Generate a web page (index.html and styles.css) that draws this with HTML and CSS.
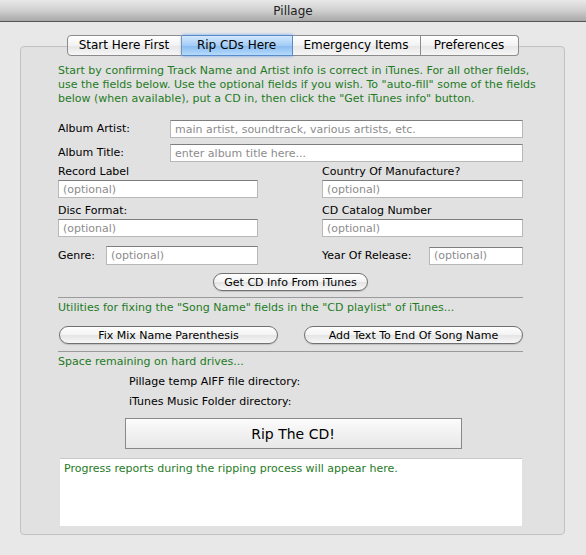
FILE: index.html
```html
<!DOCTYPE html>
<html lang="en">
<head>
  <meta charset="UTF-8">
  <meta name="viewport" content="width=device-width, initial-scale=1.0">
  <title>Pillage</title>
  <link rel="stylesheet" href="styles.css">
</head>
<body>
  <div class="titlebar">Pillage</div>

  <div class="tabview">
    <div class="tabs">
      <div class="tab first">Start Here First</div>
      <div class="tab active">Rip CDs Here</div>
      <div class="tab emergency">Emergency Items</div>
      <div class="tab last">Preferences</div>
    </div>

    <div class="panel">
      <div class="content">
        <p class="note intro">Start by confirming Track Name and Artist info is correct in iTunes. For all other fields, use the fields below. Use the optional fields if you wish. To "auto-fill" some of the fields below (when available), put a CD in, then click the "Get iTunes info" button.</p>

        <!-- Album fields -->
        <div class="row wide first-row">
          <label>Album Artist:</label>
          <input type="text" placeholder="main artist, soundtrack, various artists, etc.">
        </div>
        <div class="row wide">
          <label>Album Title:</label>
          <input type="text" placeholder="enter album title here...">
        </div>

        <!-- Optional fields -->
        <div class="grid">
          <div class="field">
            <label>Record Label</label>
            <input type="text" placeholder="(optional)">
          </div>
          <div class="field">
            <label>Country Of Manufacture?</label>
            <input type="text" placeholder="(optional)">
          </div>
          <div class="field">
            <label>Disc Format:</label>
            <input type="text" placeholder="(optional)">
          </div>
          <div class="field">
            <label>CD Catalog Number</label>
            <input type="text" placeholder="(optional)">
          </div>
          <div class="row genre">
            <label>Genre:</label>
            <input type="text" placeholder="(optional)">
          </div>
          <div class="row year">
            <label>Year Of Release:</label>
            <input type="text" placeholder="(optional)">
          </div>
        </div>

        <div class="center">
          <button class="pill get-info">Get CD Info From iTunes</button>
        </div>

        <hr>
        <p class="note">Utilities for fixing the "Song Name" fields in the "CD playlist" of iTunes...</p>
        <div class="utilities">
          <button class="pill">Fix Mix Name Parenthesis</button>
          <button class="pill">Add Text To End Of Song Name</button>
        </div>

        <hr>
        <p class="note">Space remaining on hard drives...</p>
        <div class="drives">
          <p>Pillage temp AIFF file directory:</p>
          <p>iTunes Music Folder directory:</p>
        </div>

        <div class="center">
          <button class="rip">Rip The CD!</button>
        </div>

        <div class="progress">Progress reports during the ripping process will appear here.</div>
      </div>
    </div>
  </div>
</body>
</html>
```

FILE: styles.css
```css
body {
  font-family: "DejaVu Sans", Verdana, sans-serif;
  font-size: 11px;
  margin: 0;
  padding: 0;
  background-color: #e8e8e8;
  color: #000;
}
.titlebar {
  height: 21px;
  line-height: 22px;
  text-align: center;
  font-size: 12px;
  color: #222;
  background: linear-gradient(#e9e9e9, #cfcfcf 50%, #a8a8a8);
  border-bottom: 1px solid #555;
}
.tabview {
  padding: 13px 21px 0 20px;
}
.tabs {
  display: flex;
  justify-content: center;
  position: relative;
  z-index: 1;
  margin-bottom: -10px;
}
.tab {
  width: 113px;
  height: 19px;
  line-height: 19px;
  text-align: center;
  font-size: 12px;
  border: 1px solid #8c8c8c;
  border-left: none;
  background: linear-gradient(#ffffff, #f2f2f2 50%, #e6e6e6 51%, #f6f6f6);
}
.tab.first {
  border-left: 1px solid #8c8c8c;
  border-radius: 4px 0 0 4px;
}
.tab.active {
  width: 110px;
  background: linear-gradient(#d3e8fe, #a3ccf6 50%, #88bbf0 51%, #b5dafc);
  border-color: #5a8bc8;
  box-shadow: 0 0 3px #6aa3e8;
}
.tab.emergency {
  width: 127px;
}
.tab.last {
  width: 97px;
  border-radius: 0 4px 4px 0;
}
.panel {
  background-color: #e1e1e1;
  border: 1px solid #c2c2c2;
  border-radius: 4px;
  height: 487px;
}
.content {
  width: 465px;
  margin: 17px 0 0 37px;
}
.note {
  color: #1e7b1e;
  margin: 0;
  line-height: 14px;
}
.intro {
  width: 480px;
}
label {
  line-height: 14px;
  white-space: nowrap;
}
input {
  font-family: inherit;
  font-size: 11px;
  height: 18px;
  min-width: 0;
  box-sizing: border-box;
  padding: 0 4px;
  border: 1px solid #b8b8b8;
  border-top-color: #7e7e7e;
  background-color: #fff;
  outline: none;
}
input::placeholder {
  color: #8c8c8c;
}
.row {
  display: flex;
  align-items: center;
}
.wide {
  margin-top: 6px;
}
.wide.first-row {
  margin-top: 14px;
}
.wide label {
  width: 112px;
}
.wide input {
  flex: 1;
}
.grid {
  display: grid;
  grid-template-columns: 200px minmax(0, 1fr);
  column-gap: 64px;
  row-gap: 6px;
  margin-top: 3px;
}
.field label {
  display: block;
  margin-bottom: 1px;
}
.field input {
  width: 100%;
}
.genre, .year {
  margin-top: 3px;
}
.genre label {
  width: 48px;
}
.genre input {
  flex: 1;
  height: 19px;
}
.year label {
  width: 107px;
}
.year input {
  flex: 1;
}
.center {
  display: flex;
  justify-content: center;
}
button {
  font-family: inherit;
  color: #000;
  cursor: pointer;
}
.pill {
  height: 18px;
  font-size: 11px;
  padding: 0 10px;
  border: 1px solid #707070;
  border-radius: 9px;
  background: linear-gradient(#ffffff, #f3f3f3 50%, #e4e4e4 51%, #f7f7f7);
  box-shadow: 0 1px 1px rgba(0, 0, 0, 0.15);
}
.get-info {
  width: 155px;
  margin-top: 8px;
}
hr {
  border: none;
  border-top: 1px solid #9a9a9a;
  margin: 6px 0 3px 0;
}
.utilities {
  display: flex;
  justify-content: space-between;
  margin: 11px 0 7px 1px;
}
.utilities .pill {
  width: 219px;
}
.drives {
  margin: 6px 0 0 71px;
}
.drives p {
  margin: 0 0 6px 0;
  line-height: 14px;
}
.rip {
  width: 337px;
  height: 31px;
  font-size: 14px;
  margin: 3px 0 0 5px;
  border: 1px solid #888;
  background: linear-gradient(#fcfcfc, #f1f1f1 50%, #e8e8e8);
}
.progress {
  margin: 9px 0 0 2px;
  width: 454px;
  height: 61px;
  padding: 3px 4px;
  box-sizing: content-box;
  background-color: #fff;
  border-top: 1px solid #c8c8c8;
  color: #1e7b1e;
  line-height: 14px;
}
```
